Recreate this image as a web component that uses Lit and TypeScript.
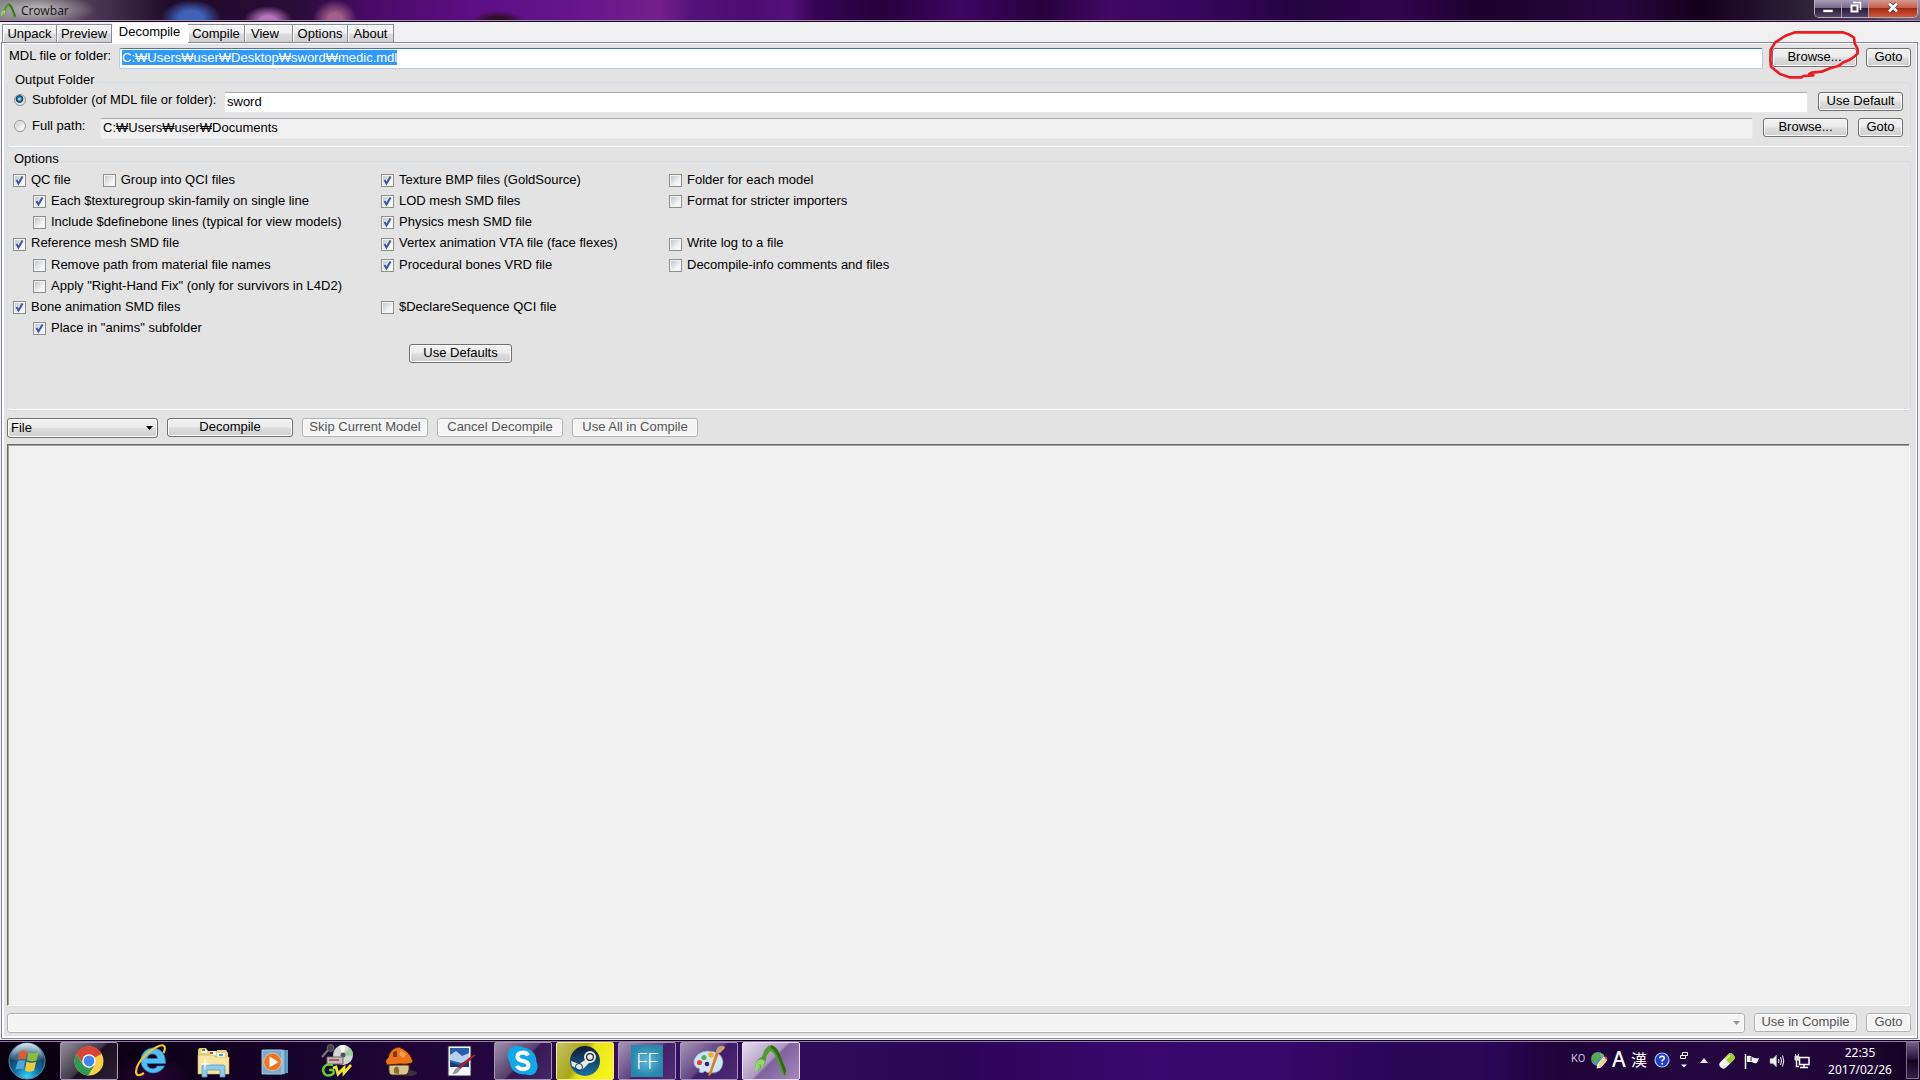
import { LitElement, html, css, svg, nothing } from "lit";
import { customElement } from "lit/decorators.js";
import { classMap } from "lit/directives/class-map.js";

interface Option {
  id: string;
  label: string;
  on: boolean;
  row: number;
  col: number;
  nested?: boolean;
}

const TABS = ["Unpack", "Preview", "Decompile", "Compile", "View", "Options", "About"];

const OPTIONS: Option[] = [
  { id: "texgroup", label: "Each $texturegroup skin-family on single line", on: true, row: 2, col: 1, nested: true },
  { id: "definebone", label: "Include $definebone lines (typical for view models)", on: false, row: 3, col: 1, nested: true },
  { id: "refmesh", label: "Reference mesh SMD file", on: true, row: 4, col: 1 },
  { id: "removepath", label: "Remove path from material file names", on: false, row: 5, col: 1, nested: true },
  { id: "righthand", label: "Apply \"Right-Hand Fix\" (only for survivors in L4D2)", on: false, row: 6, col: 1, nested: true },
  { id: "boneanim", label: "Bone animation SMD files", on: true, row: 7, col: 1 },
  { id: "anims", label: "Place in \"anims\" subfolder", on: true, row: 8, col: 1, nested: true },
  { id: "texture", label: "Texture BMP files (GoldSource)", on: true, row: 1, col: 2 },
  { id: "lod", label: "LOD mesh SMD files", on: true, row: 2, col: 2 },
  { id: "physics", label: "Physics mesh SMD file", on: true, row: 3, col: 2 },
  { id: "vta", label: "Vertex animation VTA file (face flexes)", on: true, row: 4, col: 2 },
  { id: "vrd", label: "Procedural bones VRD file", on: true, row: 5, col: 2 },
  { id: "declseq", label: "$DeclareSequence QCI file", on: false, row: 7, col: 2 },
  { id: "folder", label: "Folder for each model", on: false, row: 1, col: 3 },
  { id: "strict", label: "Format for stricter importers", on: false, row: 2, col: 3 },
  { id: "log", label: "Write log to a file", on: false, row: 4, col: 3 },
  { id: "info", label: "Decompile-info comments and files", on: false, row: 5, col: 3 },
];

const crowbarShape = svg`
  <path d="M2 26 Q3 15 9 14 Q12 3 18 2 Q24 3 28 14 L33 27 L32 33 L28 29 Q24 12 18 8 Q14 9 12 20 L9 27 L6 22 L6 28 Z" fill="#4f9a2c"/>
  <path d="M18 2 Q24 3 28 14 L33 27 L32 33 L28 22 Q23 7 18 5 Z" fill="#2f6a1a"/>
  <path d="M2 27 Q2 17 8 16 L12 18 L9 27 L7 21 L5 28 Z" fill="#93d46c"/>`;

@customElement("app-taskbar")
export class AppTaskbar extends LitElement {
  static styles = css`
    :host {
      display: flex;
      height: 40px;
      box-sizing: border-box;
      border-top: 1px solid #0c0212;
      box-shadow: inset 0 1px #9b78b4;
      color: #fff;
      font: 12px/17px "Noto Sans", "Liberation Sans", sans-serif;
      background:
        radial-gradient(ellipse 40px 18px at 150px 34px, #3a0a4a99, transparent),
        linear-gradient(90deg, #080010 0, #0b0014 120px, #1a0430 330px, #22063c 480px, #371060 640px, #2c0556 960px, #3a0870 1150px, #37086c 1270px, #2b0556 1400px, #2d0658 1480px, #1e0338 1560px, #25053f 1700px, #1e0636 1850px, #12021f 100%);
    }
    button {
      flex: none;
      padding: 0;
      border: 0;
      background: none;
      font: inherit;
      color: inherit;
    }
    .apps { display: flex; gap: 4px; padding-top: 1px; }
    .start { width: 54px; margin-right: 2px; display: grid; place-items: center; }
    .app {
      width: 58px;
      height: 38px;
      display: grid;
      place-items: center;
      box-sizing: border-box;
      border: 1px solid transparent;
      border-radius: 2px;
    }
    .app.open {
      border-color: #a893bb;
      background: linear-gradient(135deg, #ffffff90 0, #ffffff38 48%, #ffffff10 52%, #ffffff20 100%);
    }
    .app.alert { border-color: #f4f07c; background: linear-gradient(120deg, #c4c46c 0, #a9a516 40%, #e8e41c 52%, #fbf81c 100%); }
    .app.active { border-color: #e9dff0; background: linear-gradient(135deg, #e6dcee 0, #ad98c0 48%, #80629f 52%, #a48abb 100%); }
    svg { display: block; }
    .tray { margin-left: auto; display: flex; align-items: center; }
    .ko { font: 11px/16px Roboto, sans-serif; color: #cabfd8; width: 18px; padding-bottom: 4px; text-align: left; }
    .slot { width: 20px; display: grid; place-items: center; }
    .lift { padding-bottom: 2px; }
    .wide { width: 25px; }
    .letter { font: 500 21px/24px "Noto Sans", sans-serif; width: 20px; padding-bottom: 4px; text-align: center; }
    .han { font: 16px/24px "Noto Sans CJK JP", sans-serif; }
    .clock { width: 92px; text-align: center; }
    .desktop { align-self: stretch; width: 13px; margin: 1px 1px 1px 0; border: 1px solid #7d6b90; background: linear-gradient(#6d5b80, #2a1440 45%, #12041f 50%, #33204a); }
  `;

  private app(name: string, icon: unknown, state = "") {
    return html`<button class=${classMap({ app: true, open: state !== "", alert: state === "alert", active: state === "active" })} aria-label=${name}>
      <svg width="36" height="36" viewBox="0 0 36 36">${icon}</svg>
    </button>`;
  }

  render() {
    return html`
      <div class="apps">
        <button class="start" aria-label="Start">
          <svg width="38" height="38" viewBox="0 0 38 38">
            <defs>
              <radialGradient id="orb" cx="50%" cy="95%" r="90%">
                <stop offset="0" stop-color="#37d3ff" /><stop offset=".4" stop-color="#0d6ea5" /><stop offset=".75" stop-color="#12405f" /><stop offset="1" stop-color="#7ea6bb" />
              </radialGradient>
              <linearGradient id="shine" x2="0" y2="1"><stop offset="0" stop-color="#e8f4fa" stop-opacity=".8" /><stop offset="1" stop-color="#8ab4cb" stop-opacity=".15" /></linearGradient>
            </defs>
            <circle cx="19" cy="19" r="18" fill="url(#orb)" stroke="#5f88a0" />
            <path d="M3 17A16 16 0 0 1 35 17Q19 22 3 17Z" fill="url(#shine)" />
            <path d="M12 9.500Q15.500 7.500 19 9.500L17.500 17.500Q14 16 10 18Z" fill="#e8592a" />
            <path d="M20.500 10Q25 12.500 31 10L28.500 18.500Q23 20.500 19 18Z" fill="#8dbb3c" />
            <path d="M9.500 19.500Q13 17.500 17 19L15.500 27.500Q11.500 26 7.500 28Z" fill="#4fa8dc" />
            <path d="M18.500 19.500Q23 22 28 19.800L26 28.500Q21 31 17 28.500Z" fill="#f7c93a" />
          </svg>
        </button>
        ${this.app("Chrome", svg`
          <circle cx="18" cy="18" r="14.500" fill="#f8cf45"/>
          <path d="M18 18L5.400 10.800A14.500 14.500 0 0 1 30.600 10.800Z" fill="#d9453a"/>
          <path d="M18 11H30.700A14.500 14.500 0 0 0 5.400 10.800L12 21Z" fill="#d9453a"/>
          <path d="M5.400 10.800A14.500 14.500 0 0 0 17 32.500L24 21.500L18 25L12 21.500Z" fill="#2f9a55"/>
          <circle cx="18" cy="18" r="6.800" fill="#fff"/><circle cx="18" cy="18" r="5.400" fill="#4484f0"/>`, "open")}
        ${this.app("Internet Explorer", svg`
          <path d="M19 5A12.500 12.500 0 1 0 31.500 23H24.500Q22.500 26 19.500 25.800Q14.300 25.500 14 20.500H32.500Q33 5.500 19 5ZM14.200 15.500Q15 11 19.500 11Q24 11.200 24.500 15.500Z" fill="#55bdf0" stroke="#1c7fc4" stroke-width=".8"/>
          <path d="M11 30Q4 35 3 29Q3 20 16 9Q28 0 31 3Q33 5 30.500 10" fill="none" stroke="#f3c623" stroke-width="2.200"/>`)}
        ${this.app("Explorer", svg`
          <path d="M3 8Q3 5 5 5H11L13 8H22V7H31L33 10V31H3Z" fill="#e8cf78"/>
          <path d="M6 7H12V10H6ZM15 8H21V12H15ZM22 10H30V14H22Z" fill="#fff"/>
          <path d="M7 6H10V8H7Z" fill="#35a435"/><path d="M15 9H18V11H15Z" fill="#dd3c30"/><path d="M24 11H28V13H24Z" fill="#39a0dd"/>
          <path d="M3 12H18L20 14H34V31H3Z" fill="#f6e6a0" stroke="#cbb35e" stroke-width=".6"/>
          <path d="M7 34V24Q7 22 9 22H28Q30 22 30 24V34H25V27H12V34Z" fill="#8fcbe8" stroke="#4f9cc8" stroke-width=".8"/>
          <path d="M10 14L11 20L17 21L11 22L10 28L9 22L4 21L9 20Z" fill="#fff" opacity=".8"/>`)}
        ${this.app("Media Player", svg`
          <path d="M12 7H31V30H12Z" fill="#5c9cc9"/><path d="M9 7H28V31H9Z" fill="#8dbbd9" stroke="#3f7ba6" stroke-width=".7"/>
          <path d="M5 7H25V31H5Z" fill="#79add0" stroke="#b8d8ea" stroke-width=".8"/>
          <circle cx="15.500" cy="19" r="8.800" fill="#ee7420" stroke="#fbc59a" stroke-width=".8"/><path d="M12.500 13.500L21.500 19L12.500 24.500Z" fill="#fff"/>`)}
        ${this.app("GoldWave", svg`
          <circle cx="24" cy="12" r="10" fill="#cfd8cf"/><path d="M24 12L31 5A10 10 0 0 1 34 13Z" fill="#9ccf9c"/><path d="M24 12L20 3A10 10 0 0 1 27 2.500Z" fill="#fff"/><circle cx="24" cy="12" r="2.500" fill="#54505c"/>
          <path d="M3 14L10 6" stroke="#777" stroke-width="2"/><circle cx="11.500" cy="5" r="3.500" fill="#42424a" stroke="#888" stroke-width=".6"/>
          <path d="M8 14H24V21H8Z" fill="#c9b9b9" stroke="#776a70"/><path d="M10 17H20" stroke="#8a4545" stroke-width="1.500"/>
          <path d="M14 22Q5 20 4 27Q5 34 12 32Q16 31 14 27H10" fill="none" stroke="#5fd02e" stroke-width="2.500"/>
          <path d="M14 25L17 24L19 31L25 25L25 30L32 22" fill="none" stroke="#ede53a" stroke-width="2.800"/>`)}
        ${this.app("MapleStory", svg`
          <ellipse cx="28" cy="30" rx="8" ry="3" fill="#35303c"/>
          <path d="M8 22Q7 32 11 32H24Q29 31 28 22Z" fill="#d8c590" stroke="#4a2d12"/>
          <path d="M13 30V26Q14 23 17 24Q19 27 18 31Z" fill="#8a6a2c"/>
          <path d="M6 22Q3 17 7 15Q9 5 18 4Q28 8 31 16L32 19Q28 22 19 21Z" fill="#ec7418" stroke="#4a2008"/>
          <path d="M12 14V9L16 8V14Z" fill="#7a3b10"/><path d="M20 7L25 11L23 15L18 12Z" fill="#f8a048"/>`)}
        ${this.app("Image editor", svg`
          <path d="M5 3H28V33H5Z" fill="#f4f6fa" stroke="#282840"/><path d="M7 5H26V24H7Z" fill="#2a5cac"/>
          <path d="M7 12L13 8L19 13L26 10V17L18 20L7 17Z" fill="#b6d1ee"/><path d="M7 19L16 22L26 19V24H7Z" fill="#173a7c"/>
          <path d="M33 12L17 26L15 24L30 12Z" fill="#b5202a" stroke="#6d1018" stroke-width=".5"/><path d="M17 26Q16 31 9 31Q11 29 12 26L15 24Z" fill="#8d97a8"/>`)}
        ${this.app("Skype", svg`
          <path d="M12 3Q16 3 18 4.500Q31 6 31.500 19Q34 24 31 29Q27 34 21 31.500Q6 32 4.500 18Q1 13 4 7Q7 3 12 3Z" fill="#10a8e8"/>
          <path d="M23 12.500Q22 9.500 17.500 9.500Q12.500 10 12.500 13.800Q12.500 17 18 18Q23.500 19 23.500 22.500Q23 26 18 26.200Q13 26 12.200 22.800" fill="none" stroke="#fff" stroke-width="4"/>`, "open")}
        ${this.app("Steam", svg`
          <defs><linearGradient id="stm" x2="0" y2="1"><stop offset="0" stop-color="#101a38"/><stop offset="1" stop-color="#1673a4"/></linearGradient></defs>
          <circle cx="18" cy="18" r="15" fill="url(#stm)"/>
          <path d="M4 18L12 21L18 17L20 12L25 9L28 13L27 18L22 20L17 25Q14 28 11 26L5 23Z" fill="#e8ebe6"/>
          <circle cx="23" cy="14" r="5" fill="#17243e" stroke="#e8ebe6" stroke-width="2"/><circle cx="23" cy="14" r="2.800" fill="#e8ebe6"/><circle cx="12" cy="24" r="3.500" fill="none" stroke="#17375c"/>`, "alert")}
        ${this.app("FF", svg`
          <defs><radialGradient id="ff"><stop offset="0" stop-color="#5fb8d4"/><stop offset="1" stop-color="#2688ac"/></radialGradient></defs>
          <path d="M2 2H34V34H2Z" fill="url(#ff)"/>
          <text x="18" y="26" text-anchor="middle" fill="#fff" font-family="Open Sans, Noto Sans, sans-serif" font-weight="300" font-size="22">FF</text>`, "open")}
        ${this.app("Paint", svg`
          <path d="M16 8Q31 8 32 19Q31 31 19 30Q16 30 14 28Q12 31 8 29Q10 25 6 25Q2 22 3 17Q6 9 16 8Z" fill="#cfe5f5" stroke="#7fa9cc" stroke-width=".8"/>
          <circle cx="8.500" cy="19.500" r="2.600" fill="#e0483a"/><circle cx="13" cy="14.500" r="2.600" fill="#55b04a"/><circle cx="20" cy="12" r="2.800" fill="#f2b12c"/><circle cx="16" cy="21" r="2.300" fill="#35206a"/>
          <path d="M28 10L25 9L17 33Q20 33 21 29Z" fill="#e07c28"/><path d="M25 10Q25 3 30 3Q34 2 34 5L29 10Z" fill="#c9a27c"/>`, "open")}
        ${this.app("Crowbar", crowbarShape, "active")}
      </div>
      <div class="tray">
        <button class="ko">KO</button>
        <button class="slot lift" aria-label="Input pad">
          <svg width="18" height="18" viewBox="0 0 18 18"><circle cx="8" cy="8" r="7" fill="#4f90b8" /><path d="M2 5Q5 1 8 2L11 5L7 8L8 12L4 12Q1 9 2 5Z" fill="#5aa84c" /><path d="M10 2L14 4L15 9L11 7Z" fill="#7cba6a" /><path d="M8 13L14 6L17 9L11 16L7 17Z" fill="#ecd58c" stroke="#fff" /><path d="M15 6L17 8" stroke="#d04040" stroke-width="2" /></svg>
        </button>
        <button class="letter">A</button>
        <button class="letter han">漢</button>
        <button class="wide lift slot" aria-label="Help">
          <svg width="16" height="16" viewBox="0 0 16 16"><circle cx="8" cy="8" r="7" fill="#1c3fc4" stroke="#b6c4e8" stroke-width="1.200" /><path d="M5.700 6.300Q5.800 4.200 8 4.200Q10.300 4.300 10.300 6.200Q10.200 7.500 8.200 8.400V9.600" fill="none" stroke="#fff" stroke-width="1.600" /><circle cx="8.200" cy="11.700" r="1" fill="#fff" /></svg>
        </button>
        <button class="slot lift" aria-label="Language bar options">
          <svg width="10" height="18" viewBox="0 0 10 18"><path d="M3.500 4V1.500H8.500V4.500H6.500M1.500 4.500H6.500V7.500H1.500Z" fill="none" stroke="#fff" /><path d="M2 13.500H8L5 16.500Z" fill="#fff" /></svg>
        </button>
        <button class="slot" aria-label="Show hidden icons">
          <svg width="8" height="5" viewBox="0 0 8 5"><path d="M0 5L4 0L8 5Z" fill="#e8e4f0" /></svg>
        </button>
        <button class="wide slot" aria-label="Tablet">
          <svg width="18" height="18" viewBox="0 0 18 18"><g transform="rotate(-45 9 9)"><rect x="0" y="5" width="18" height="8" rx="4" fill="#f2f2f2" /><path d="M9 5H14A4 4 0 0 1 14 13H9Z" fill="#9ed12c" /><path d="M3 7H15" stroke="#fff" stroke-width="1.500" opacity=".7" /></g></svg>
        </button>
        <button class="wide slot" aria-label="Action Center">
          <svg width="16" height="16" viewBox="0 0 16 16"><path d="M1.500 1V16" stroke="#fff" stroke-width="1.500" /><path d="M3 3Q6 2 8 4Q11 6 15 5L13 10Q11 11 8 9H3Z" fill="#fff" /><path d="M7 4V8" stroke="#23043f" /></svg>
        </button>
        <button class="wide slot" aria-label="Volume">
          <svg width="16" height="16" viewBox="0 0 16 16"><path d="M1 5.500H4L7.500 2V14L4 10.500H1Z" fill="#eee" stroke="#999" stroke-width=".6" /><path d="M9.500 6Q10.500 8 9.500 10M11.500 4Q13.500 8 11.500 12M13.500 2.500Q16 8 13.500 13.500" fill="none" stroke="#fff" /></svg>
        </button>
        <button class="wide slot" aria-label="Network">
          <svg width="16" height="16" viewBox="0 0 16 16"><path d="M5.500 4.500H15V11.500H5.500ZM10 12V14.500M6 14.500H14M2.500 6V13.500H5" fill="none" stroke="#fff" stroke-width="1.500" /><path d="M1 3H5V7H1ZM1.500 1V3M4.500 1V3" fill="#ddd" stroke="#ddd" /></svg>
        </button>
        <button class="clock">22:35<br />2017/02/26</button>
        <button class="desktop" aria-label="Show desktop"></button>
      </div>
    `;
  }
}

@customElement("app-root")
export class AppRoot extends LitElement {
  static styles = css`
    :host {
      display: flex;
      flex-direction: column;
      min-height: 100vh;
      background: #f0f0f0;
      color: #000;
      font: 13px/16px "Liberation Sans", "Noto Sans CJK KR", sans-serif;
    }
    button, input, select { font: inherit; color: inherit; box-sizing: border-box; margin: 0; }

    .titlebar {
      position: relative;
      display: flex;
      height: 22px;
      box-sizing: border-box;
      border-bottom: 1px solid #1a0822;
      box-shadow: inset 0 -1px #a98bb8;
      overflow: hidden;
      background:
        radial-gradient(ellipse 60px 16px at 36px 10px, #b0acb0 20%, transparent),
        radial-gradient(ellipse 30px 18px at 191px 18px, #3f62b8 40%, transparent),
        radial-gradient(ellipse 24px 14px at 268px 20px, #b873bd 30%, transparent),
        radial-gradient(ellipse 22px 19px at 335px 19px, #a0608a 30%, transparent),
        radial-gradient(ellipse 26px 10px at 498px 21px, #2a1020 35%, transparent),
        radial-gradient(ellipse 70px 26px at 100% 0, #a79bb0, transparent),
        linear-gradient(90deg, #77757a 0, #57465c 70px, #3a2a44 120px, #1f0a2a 170px, #2b0c3a 300px, #4a0a66 370px, #5c0e84 470px, #62148a 560px, #741f8c 660px, #55127c 690px, #4c0c72 750px, #55107c 790px, #360454 815px, #28003c 880px, #3e0660 960px, #28003e 1040px, #420862 1110px, #36065c 1200px, #250340 1300px, #30054c 1400px, #1c002c 1480px, #2a0640 1620px, #12001c 1700px, #2c2034 1800px, #5c5066 100%);
    }
    .brand { display: flex; align-items: center; gap: 4px; font: 12px/16px "Noto Sans", sans-serif; color: #1c1c20; }
    .caption { display: flex; height: 18px; margin: 0 2px 0 auto; border: 1px solid #b8adc0; border-top: 0; border-radius: 0 0 5px 5px; overflow: hidden; box-sizing: border-box; }
    .caption button { width: 27px; padding: 0 0 2px; border: 0; border-right: 1px solid #a99db4; display: grid; place-items: center; background: linear-gradient(#a89eb2, #76698a 45%, #2b1c3a 50%, #54456a); }
    .caption .close { width: 48px; border-right: 0; background: linear-gradient(#d59a8c, #c5614e 45%, #a52a14 50%, #d0583c); }

    .tabs { display: grid; grid-template-columns: 55px 55px 76px 57px 48px 55px 46px; align-items: end; height: 20px; padding-left: 2px; }
    .tab { height: 18px; padding: 0; border: 1px solid #898c95; border-bottom: 0; border-left-width: 0; background: linear-gradient(#f2f2f2 0 45%, #dcdcdc 55%, #d0d0d0); box-shadow: inset 1px 1px #fff; line-height: 16px; text-align: center; }
    .tab:first-child { border-left-width: 1px; }
    .tab.left { text-align: left; padding-left: 6px; }
    .tab.selected { position: relative; z-index: 1; height: 21px; margin-bottom: -2px; border-color: #fff; background: #fff; padding-bottom: 4px; }

    .page { flex: 1; display: flex; flex-direction: column; gap: 2px; margin: 0 2px 1px 1px; padding: 5px 6px 5px 5px; border: 1px solid #87849a; box-shadow: inset 0 0 0 1px #fff, inset 2px -2px #fff; background: #e3e3e3; }

    .row { display: flex; align-items: flex-start; gap: 9px; }
    .choice { line-height: 16px; white-space: nowrap; }
    .row > label { width: 103px; padding-left: 2px; box-sizing: border-box; white-space: nowrap; }
    .field { flex: 1; min-width: 0; height: 21px; padding: 0 2px 2px; border: 1px solid #e3e9ef; border-top-color: #abadb3; border-radius: 2px; background: #fff; outline: 0; }
    .field.focus { border-color: #b5cfe7; border-top-color: #3d7bad; }
    .field:read-only { background: #f0f0f0; }
    .field::selection { background: #3399ff; color: #fff; }

    .btn { flex: none; height: 19px; padding: 0 4px 2px; border: 1px solid #707070; border-radius: 3px; background: linear-gradient(#f2f2f2, #ebebeb 48%, #dddddd 52%, #cfcfcf); box-shadow: inset 0 0 0 1px #fcfcfc; line-height: 15px; white-space: nowrap; }
    .btn:disabled { color: #555; border-color: #adb2b5; background: #f4f4f4; }
    .w45 { width: 45px; }
    .w85 { width: 85px; }
    .w103 { width: 103px; }
    .w126 { width: 126px; }
    .marked { position: relative; display: flex; }
    .ring { position: absolute; left: -7px; top: -21px; width: 100px; height: 56px; pointer-events: none; }

    fieldset { min-width: 0; margin: 1px 0 0; padding: 0 7px 8px 6px; border: 1px solid #d3dee6; border-radius: 3px; box-shadow: inset 0 -1px #fff; }
    legend { height: 20px; box-sizing: border-box; padding: 0 2px 5px 1px; line-height: 15px; }
    .output { display: flex; flex-direction: column; gap: 5px; }
    .output .row { gap: 10px; }
    .choice { display: flex; align-items: center; gap: 6px; }
    .choice.sub { width: 200px; }
    .choice.full { width: 76px; }

    input[type="radio"], input[type="checkbox"] { appearance: none; flex: none; width: 13px; height: 13px; border: 1px solid #8e8f8f; background: linear-gradient(135deg, #c3c8d0, #f6f6f6 75%) content-box, #f4f4f4; padding: 1px; }
    input[type="radio"] { width: 12px; height: 12px; border-radius: 50%; }
    input[type="radio"]:checked { background: radial-gradient(circle at 45% 40%, #7fd8f8 0 12%, #1b6ea0 28%, #12304a 42%, #e0e6ea 52%); }
    input[type="checkbox"]:checked { background: url("data:image/svg+xml,%3Csvg xmlns='http://www.w3.org/2000/svg' viewBox='0 0 11 11'%3E%3Cpath d='M2.500 5L4.500 8.500L8.500 1.500' fill='none' stroke='%233c55a5' stroke-width='2'/%3E%3C/svg%3E") center / 11px 11px no-repeat, linear-gradient(135deg, #c3c8d0, #f6f6f6 75%) content-box, #f4f4f4; }

    .options { padding: 0 5px 47px; }
    .grid { display: grid; grid-template-columns: 368px 288px 1fr; grid-template-rows: repeat(3, 19px) 20px repeat(4, 19px); row-gap: 2px; }
    .pair { display: flex; gap: 32px; }
    .nested { padding-left: 20px; }
    .check { display: flex; align-items: center; gap: 5px; white-space: nowrap; }
    .check label { padding-bottom: 2px; }
    .r1 { grid-row: 1; } .r2 { grid-row: 2; } .r3 { grid-row: 3; } .r4 { grid-row: 4; }
    .r5 { grid-row: 5; } .r6 { grid-row: 6; } .r7 { grid-row: 7; } .r8 { grid-row: 8; }
    .c1 { grid-column: 1; } .c2 { grid-column: 2; } .c3 { grid-column: 3; }
    .defaults { display: flex; padding: 6px 0 0 396px; }

    .actions { padding-top: 5px; }
    .combo { appearance: none; height: 20px; padding: 0 20px 0 3px; border: 1px solid #707070; border-radius: 3px; box-shadow: inset 0 0 0 1px #fcfcfc; background: url("data:image/svg+xml,%3Csvg xmlns='http://www.w3.org/2000/svg' viewBox='0 0 7 4'%3E%3Cpath d='M0 0H7L3.500 4Z'/%3E%3C/svg%3E") right 4px center / 7px 4px no-repeat, linear-gradient(#f2f2f2, #ebebeb 48%, #dddddd 52%, #cfcfcf); }
    .combo.mode { width: 151px; }
    .combo.result { flex: 1; min-width: 0; opacity: 1; border-color: #adb2b5; background: url("data:image/svg+xml,%3Csvg xmlns='http://www.w3.org/2000/svg' viewBox='0 0 7 4'%3E%3Cpath d='M0 0H7L3.500 4Z' fill='%23999'/%3E%3C/svg%3E") right 4px center / 7px 4px no-repeat, #f4f4f4; }
    .log { flex: 1; margin: 4px 1px 5px 0; border: 1px solid #fff; border-top: 1px solid #696969; border-left: 1px solid #696969; box-shadow: inset 1px 1px #a0a0a0; background: #f0f0f0; }
  `;

  firstUpdated() {
    const field = this.renderRoot.querySelector<HTMLInputElement>("#mdl");
    field?.focus();
    field?.select();
  }

  private check(id: string, label: string, on: boolean, cls = "") {
    return html`<div class="check ${cls}"><input type="checkbox" id=${id} .checked=${on} /><label for=${id}>${label}</label></div>`;
  }

  render() {
    return html`
      <header class="titlebar">
        <div class="brand">
          <svg width="17" height="18" viewBox="0 0 36 36">${crowbarShape}</svg>
          <span>Crowbar</span>
        </div>
        <div class="caption">
          <button aria-label="Minimize"><svg width="12" height="12" viewBox="0 0 12 12"><path d="M1 7.500H11V10.500H1Z" fill="#fff" stroke="#4a4456" stroke-width=".8" /></svg></button>
          <button aria-label="Restore"><svg width="13" height="13" viewBox="0 0 13 13"><path d="M4 1.500H11.500V9" fill="none" stroke="#fff" stroke-width="1.500" /><path d="M2.500 4.500H8.500V10.500H2.500Z" fill="#4a3e58" stroke="#fff" stroke-width="2" /></svg></button>
          <button class="close" aria-label="Close"><svg width="12" height="11" viewBox="0 0 12 11"><path d="M2 1.500L10 9.500M10 1.500L2 9.500" stroke="#5a3a3c" stroke-width="4" /><path d="M2 1.500L10 9.500M10 1.500L2 9.500" stroke="#fff" stroke-width="2.600" /></svg></button>
        </div>
      </header>

      <nav class="tabs" role="tablist">
        ${TABS.map((t) => html`<button role="tab" aria-selected=${t === "Decompile"} class=${classMap({ tab: true, selected: t === "Decompile", left: t === "View" })}>${t}</button>`)}
      </nav>

      <main class="page">
        <div class="row">
          <label for="mdl">MDL file or folder:</label>
          <input id="mdl" class="field focus" type="text" spellcheck="false" value="C:₩Users₩user₩Desktop₩sword₩medic.mdl" />
          <div class="marked">
            <button class="btn w85">Browse...</button>
            <svg class="ring" viewBox="135 81 300 168" aria-hidden="true">
              <path d="M225 97H368L386 103L402 113L404 130L413 147V160L403 170L390 179L370 187L355 198L330 205L305 215L275 218L268 222L280 226L250 228L245 232H208L180 222L153 200L151 180L152 150L165 128L195 108Z" fill="none" stroke="#ed1c24" stroke-width="8" stroke-linejoin="round" />
            </svg>
          </div>
          <button class="btn w45">Goto</button>
        </div>

        <fieldset>
          <legend>Output Folder</legend>
          <div class="output">
            <div class="row">
              <div class="choice sub"><input type="radio" name="out" id="sub" checked /><label for="sub">Subfolder (of MDL file or folder):</label></div>
              <input class="field" type="text" aria-label="Subfolder name" value="sword" />
              <button class="btn w85">Use Default</button>
            </div>
            <div class="row">
              <div class="choice full"><input type="radio" name="out" id="full" /><label for="full">Full path:</label></div>
              <input class="field" type="text" aria-label="Full path folder" readonly value="C:₩Users₩user₩Documents" />
              <button class="btn w85">Browse...</button>
              <button class="btn w45">Goto</button>
            </div>
          </div>
        </fieldset>

        <fieldset class="options">
          <legend>Options</legend>
          <div class="grid">
            <div class="pair r1 c1">
              ${this.check("qc", "QC file", true)}
              ${this.check("qci", "Group into QCI files", false)}
            </div>
            ${OPTIONS.map((o) => this.check(o.id, o.label, o.on, `r${o.row} c${o.col} ${o.nested ? "nested" : ""}`))}
          </div>
          <div class="defaults"><button class="btn w103">Use Defaults</button></div>
        </fieldset>

        <div class="row actions">
          <select class="combo mode" aria-label="Input type"><option>File</option></select>
          <button class="btn w126">Decompile</button>
          <button class="btn w126" disabled>Skip Current Model</button>
          <button class="btn w126" disabled>Cancel Decompile</button>
          <button class="btn w126" disabled>Use All in Compile</button>
        </div>

        <div class="log" role="log">${nothing}</div>

        <div class="row">
          <select class="combo result" aria-label="Decompiled files" disabled></select>
          <button class="btn w103" disabled>Use in Compile</button>
          <button class="btn w45" disabled>Goto</button>
        </div>
      </main>

      <app-taskbar></app-taskbar>
    `;
  }
}
